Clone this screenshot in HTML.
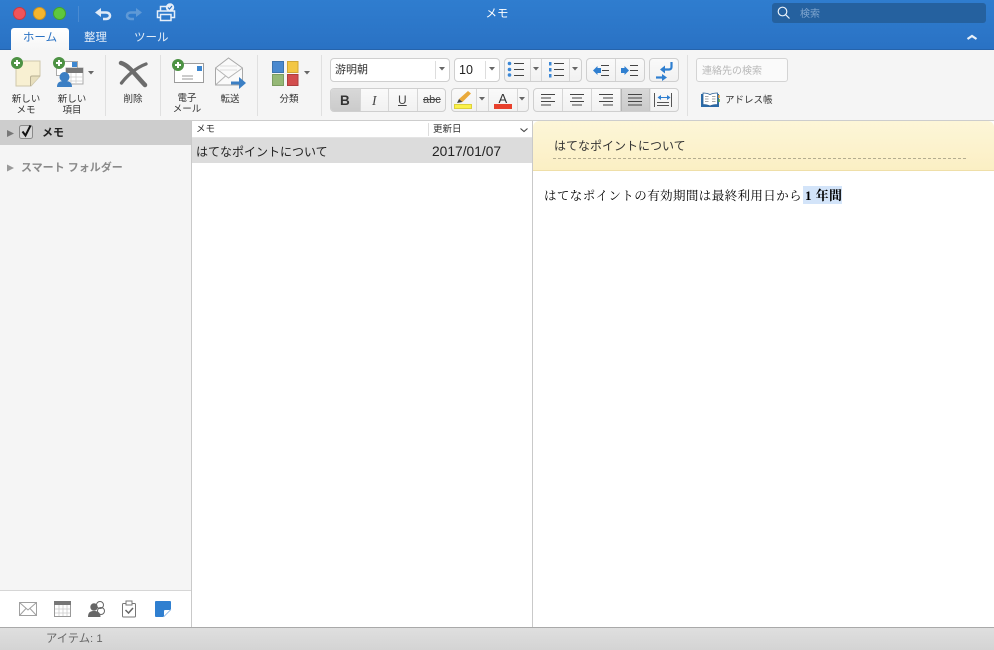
<!DOCTYPE html>
<html lang="ja"><head><meta charset="utf-8"><title>メモ</title>
<style>
html,body{margin:0;padding:0}
body{width:994px;height:650px;overflow:hidden;position:relative;background:#fff;font-family:"Liberation Sans","Noto Sans CJK JP",sans-serif;color:#222}
.a{position:absolute}
.t{position:absolute;white-space:nowrap;line-height:1}
.c{text-align:center}
.sm{font-size:9.5px;color:#333;line-height:11px}
.box{position:absolute;box-sizing:border-box;border:1px solid #cfcfcf;border-radius:4px;background:linear-gradient(#fafafa,#f1f1f1)}
.sep{position:absolute;top:55px;height:61px;width:1px;background:#e0e0e0}
svg{position:absolute;overflow:visible}
</style></head><body>

<!-- title bar -->
<div class="a" style="left:0;top:0;width:994px;height:50px;background:linear-gradient(#2f7dcf,#2a72c4);border-bottom:1px solid #2563ab;box-sizing:border-box"></div>
<div class="a" style="left:12.500px;top:7px;width:13px;height:13px;border-radius:50%;background:#f0545a;border:.5px solid #c93a40;box-sizing:border-box"></div>
<div class="a" style="left:32.500px;top:7px;width:13px;height:13px;border-radius:50%;background:#f6b52d;border:.5px solid #cf9420;box-sizing:border-box"></div>
<div class="a" style="left:52.500px;top:7px;width:13px;height:13px;border-radius:50%;background:#5ec83e;border:.5px solid #45a22c;box-sizing:border-box"></div>
<div class="a" style="left:78px;top:6px;width:1px;height:16px;background:#4a8bd2"></div>
<svg style="left:0;top:0" width="200" height="30" fill="none">
 <path d="M99 12.500h7c3 0 4 2 4 3.200s-1 3.300-4 3.300h-3" stroke="#dfeaf7" stroke-width="2.600"/><path d="M95 12.500l6-4.500v9z" fill="#dfeaf7"/>
 <path d="M138 12.500h-7c-3 0-4 2-4 3.200s1 3.300 4 3.300h3" stroke="#5f99d6" stroke-width="2.600"/><path d="M142 12.500l-6-4.500v9z" fill="#5f99d6"/>
 <path d="M160.500 11.500V6.500h9v5M160.500 17.500h-3v-6.500h17v6.500h-3M160.500 14.500h10.500v6h-10.500z" stroke="#e6eff9" stroke-width="1.500"/>
 <circle cx="170" cy="7.500" r="4.200" fill="#e6eff9"/><path d="M168 7.500l1.500 1.500 2.500-3" stroke="#2a72c4" stroke-width="1.100"/>
</svg>
<div class="t c" style="left:447px;top:9px;width:100px;font-size:11.500px;color:#fff">メモ</div>
<div class="a" style="left:772px;top:3px;width:214px;height:20px;border-radius:3px;background:#25619f"></div>
<svg style="left:776px;top:5px" width="16" height="16" fill="none" stroke="#eaf2fa" stroke-width="1.200"><circle cx="6.500" cy="6.500" r="4.300"/><path d="M9.800 9.800l3.700 3.700"/></svg>
<div class="t" style="left:800px;top:10px;font-size:10px;color:#80a6cf">検索</div>

<div class="a" style="left:11px;top:28px;width:58px;height:22px;background:linear-gradient(#fff,#f6f6f6);border-radius:3px 3px 0 0"></div>
<div class="t c" style="left:11px;top:33px;width:58px;font-size:11.500px;color:#2a72c4">ホーム</div>
<div class="t" style="left:84px;top:33px;font-size:11.500px;color:#e2ecf7">整理</div>
<div class="t" style="left:134px;top:33px;font-size:11.500px;color:#e2ecf7">ツール</div>
<svg style="left:965px;top:32px" width="14" height="10" fill="none"><path d="M2.500 7l4.500-3 4.500 3" stroke="#e8f0f9" stroke-width="2.200"/></svg>

<!-- ribbon -->
<div class="a" style="left:0;top:50px;width:994px;height:70px;background:#f5f5f5"></div>
<div class="a" style="left:0;top:120px;width:994px;height:1px;background:#cdcdcd"></div>
<div class="sep" style="left:105px"></div><div class="sep" style="left:160px"></div><div class="sep" style="left:257px"></div><div class="sep" style="left:321px"></div><div class="sep" style="left:687px"></div>

<svg style="left:0;top:50px" width="330" height="70" fill="none">
 <!-- new note -->
 <path d="M16 11h24v15l-9 10H16z" fill="#f8f0d2" stroke="#cfc8ac"/><path d="M40 26h-8c-1 0-1.500 .5-1.500 1.500V36" fill="#e8dfbd" stroke="#b9b093"/>
 <circle cx="17" cy="13" r="6" fill="#4d9244"/><path d="M17 10v6M14 13h6" stroke="#fff" stroke-width="2"/>
 <!-- new item -->
 <rect x="56.500" y="11.500" width="21" height="14" fill="#fff" stroke="#aaa"/><rect x="72" y="12" width="5" height="5" fill="#3d87d0"/>
 <rect x="66" y="18" width="17" height="16" fill="#fff" stroke="#aaa"/><rect x="66" y="18" width="17" height="5" fill="#777"/>
 <path d="M71 23v11M76 23v11M66 27h17M66 31h17" stroke="#ccc" stroke-width=".7"/>
 <circle cx="64.500" cy="27" r="5" fill="#3b7fc4"/><path d="M57 37c0-5 3-6 7.500-6s7.500 1 7.500 6z" fill="#3b7fc4"/>
 <circle cx="59" cy="13" r="6" fill="#4d9244"/><path d="M59 10v6M56 13h6" stroke="#fff" stroke-width="2"/>
 <path d="M88 21h6l-3 3.500z" fill="#666"/>
 <!-- delete -->
 <path d="M121 13C129 15 138 28 145 35" stroke="#6c6c6c" stroke-width="4.500" stroke-linecap="round"/>
 <path d="M146 14C135 18 126 27 121.500 33" stroke="#6c6c6c" stroke-width="3.300" stroke-linecap="round"/>
 <!-- mail -->
 <rect x="174.500" y="13.500" width="29" height="19" fill="#fff" stroke="#9c9c9c"/><rect x="197" y="16" width="5" height="5" fill="#3d87d0"/>
 <path d="M182 26h11M182 29h11" stroke="#999"/>
 <circle cx="178" cy="15" r="6" fill="#4d9244"/><path d="M178 12v6M175 15h6" stroke="#fff" stroke-width="2"/>
 <!-- forward -->
 <path d="M215.500 18l13-10 14 10v17h-27z" fill="#fafafa" stroke="#a8a8a8"/><path d="M215.500 18l13 10 14-10M215.500 35l10-9" stroke="#b5b5b5"/>
 <path d="M220 16h17M220 20h17" stroke="#ddd"/>
 <path d="M231 33h10" stroke="#3b7fc4" stroke-width="3"/><path d="M239 27l7 6-7 6z" fill="#3b7fc4"/>
 <!-- categorize -->
 <rect x="272.500" y="11.500" width="11" height="11" fill="#4a89cf" stroke="#3d73ad"/><rect x="287.500" y="11.500" width="10.500" height="11" fill="#f3c744" stroke="#cfa636"/>
 <rect x="272.500" y="24.500" width="11" height="11" fill="#95b876" stroke="#7c9c61"/><rect x="287.500" y="24.500" width="10.500" height="11" fill="#d24d4d" stroke="#ad3e3e"/>
 <path d="M304 21h6l-3 3.500z" fill="#666"/>
</svg>
<div class="t c sm" style="left:6px;top:93.500px;width:40px">新しい<br>メモ</div>
<div class="t c sm" style="left:52px;top:93.500px;width:40px">新しい<br>項目</div>
<div class="t c sm" style="left:113px;top:94px;width:40px">削除</div>
<div class="t c sm" style="left:167px;top:93px;width:40px">電子<br>メール</div>
<div class="t c sm" style="left:210px;top:94px;width:40px">転送</div>
<div class="t c sm" style="left:269px;top:94px;width:40px">分類</div>

<!-- font row -->
<div class="a" style="left:330px;top:58px;width:120px;height:24px;box-sizing:border-box;border:1px solid #cfcfcf;border-radius:4px;background:#fff"></div>
<div class="a" style="left:435px;top:61px;width:1px;height:18px;background:#ddd"></div>
<div class="t" style="left:335px;top:65px;font-size:11px;color:#333">游明朝</div>
<div class="a" style="left:454px;top:58px;width:46px;height:24px;box-sizing:border-box;border:1px solid #cfcfcf;border-radius:4px;background:#fff"></div>
<div class="a" style="left:485px;top:61px;width:1px;height:18px;background:#ddd"></div>
<div class="t" style="left:459px;top:64px;font-size:12.500px;color:#222">10</div>

<div class="box" style="left:504px;top:58px;width:78px;height:24px"></div>
<div class="box" style="left:586px;top:58px;width:59px;height:24px"></div>
<div class="box" style="left:649px;top:58px;width:30px;height:24px"></div>
<div class="box" style="left:330px;top:88px;width:116px;height:24px"></div>
<div class="a" style="left:331px;top:89px;width:29px;height:22px;background:linear-gradient(#d8d8d8,#cbcbcb);border-right:1px solid #b5b5b5;border-radius:3px 0 0 3px"></div>
<div class="box" style="left:451px;top:88px;width:78px;height:24px"></div>
<div class="box" style="left:533px;top:88px;width:146px;height:24px"></div>
<div class="a" style="left:621px;top:89px;width:29px;height:22px;box-sizing:border-box;background:linear-gradient(#d8d8d8,#cbcbcb);border:solid #b5b5b5;border-width:0 1px"></div>

<div class="t" style="left:340px;top:94px;font-family:'Liberation Sans',sans-serif;font-size:13.500px;font-weight:bold;color:#333">B</div>
<div class="t" style="left:372px;top:94px;font-family:'Liberation Serif',serif;font-size:13.500px;font-style:italic;color:#444">I</div>
<div class="t" style="left:398px;top:94px;font-size:12px;color:#444;text-decoration:underline">U</div>
<div class="t" style="left:423px;top:95px;font-size:11px;color:#444;text-decoration:line-through">abc</div>
<div class="t" style="left:498.500px;top:92px;font-size:13px;color:#333">A</div>

<svg style="left:325px;top:50px" width="360" height="70" fill="none">
 <!-- dropdown arrows -->
 <g fill="#666"><path d="M114 17h6l-3 3.500z"/><path d="M164 17h6l-3 3.500z"/><path d="M208 17h6l-3 3.500z"/><path d="M247 17h6l-3 3.500z"/>
 <path d="M154 47h6l-3 3.500z"/><path d="M194 47h6l-3 3.500z"/></g>
 <!-- dividers -->
 <g stroke="#d6d6d6"><path d="M35.500 39v22M63.500 39v22M92.500 39v22M151.500 39v22M163.500 39v22M192.500 39v22M205.500 9v22M216.500 9v22M244.500 9v22M290.500 9v22M237.500 39v22M266.500 39v22M295.500 39v22M325 39v22"/></g>
 <!-- bullets -->
 <g fill="#3b87d6"><circle cx="184.500" cy="13.500" r="1.800"/><circle cx="184.500" cy="19.500" r="1.800"/><circle cx="184.500" cy="25" r="1.800"/></g>
 <path d="M189 13.500h10M189 19.500h10M189 25.500h10" stroke="#444"/>
 <g fill="#3b87d6"><rect x="224" y="12" width="2.500" height="3.500"/><rect x="224" y="18" width="2.500" height="3.500"/><rect x="224" y="24" width="2.500" height="3.500"/></g>
 <path d="M229 13.500h10M229 19.500h10M229 25.500h10" stroke="#444"/>
 <!-- indent -->
 <path d="M268 20.500l4.500-4.500v9z" fill="#2f7fd0"/><path d="M272 18h4v5h-4z" fill="#2f7fd0"/><path d="M276 15.500h8M277 20.500h7M276 25.500h8" stroke="#444"/>
 <path d="M304 20.500l-4.500-4.500v9z" fill="#2f7fd0"/><path d="M296 18h4v5h-4z" fill="#2f7fd0"/><path d="M305 15.500h8M305 20.500h8M305 25.500h8" stroke="#444"/>
 <!-- rtl -->
 <path d="M346.500 12v5c0 1.500-1 2.500-2.500 2.500h-5" stroke="#2f7fd0" stroke-width="2.200"/><path d="M340 15.500l-5 4 5 4z" fill="#2f7fd0"/>
 <path d="M331 27.500h7" stroke="#2f7fd0" stroke-width="2.200"/><path d="M337 24l5 3.500-5 3.500z" fill="#2f7fd0"/>
 <!-- highlight -->
 <path d="M134 49l9-8 3 2.500-8.500 8.500z" fill="#e9a93a"/><path d="M132 53l2-4 3.500 3z" fill="#444"/>
 <rect x="129.500" y="54.500" width="17" height="4" fill="#fbf14a" stroke="#dcd13c"/>
 <rect x="169" y="54" width="18" height="5" fill="#e8402c"/>
 <!-- align -->
 <path d="M216 44.500h14M216 48h10M216 51.500h14M216 55h10M245 44.500h14M247 48h10M245 51.500h14M247 55h10M274 44.500h14M278 48h10M274 51.500h14M278 55h10M303 44.500h14M303 48h14M303 51.500h14M303 55h14" stroke="#444"/>
 <path d="M329.500 43v14M346.500 43v14" stroke="#555"/><path d="M332 52.500h12M332 55.500h12" stroke="#555"/>
 <path d="M334 47.500h10" stroke="#2f7fd0"/><path d="M336 45l-3.500 2.500 3.500 2.500zM342 45l3.500 2.500-3.500 2.500z" fill="#2f7fd0"/>
</svg>

<!-- contact -->
<div class="a" style="left:696px;top:58px;width:92px;height:24px;box-sizing:border-box;border:1px solid #d4d4d4;border-radius:3px;background:#fafafa"></div>
<div class="t" style="left:702px;top:67px;font-size:10px;color:#b8b8b8">連絡先の検索</div>
<svg style="left:700px;top:91px" width="22" height="18" fill="none">
 <path d="M1 3h18v13H1z" fill="#2a6aa8"/><path d="M3 2c3 0 5 .5 7 1.500C12 2.500 14 2 17.500 2v11.500c-3.500 0-5.500 .5-7.500 1.500-2-1-4-1.500-7-1.500z" fill="#fff" stroke="#2a5f95" stroke-width=".8"/>
 <path d="M5 5.500h3.500M5 8h3.500M5 10.500h3.500M12 5.500h3.500M12 8h3.500M12 10.500h3.500" stroke="#888" stroke-width=".8"/>
 <path d="M19 4v3" stroke="#e8a33a" stroke-width="1.500"/><path d="M19 8v3" stroke="#5aa23a" stroke-width="1.500"/>
</svg>
<div class="t" style="left:725px;top:96px;font-size:9.500px;color:#333">アドレス帳</div>

<!-- sidebar -->
<div class="a" style="left:0;top:121px;width:191px;height:507px;background:#f5f5f5"></div>
<div class="a" style="left:0;top:121px;width:191px;height:24px;background:#cdcdcd"></div>
<div class="a" style="left:191px;top:121px;width:1px;height:507px;background:#c9c9c9"></div>
<svg style="left:0;top:121px" width="60" height="60" fill="none">
 <path d="M7 9l7 3.500-7 3.500z" fill="#777"/>
 <rect x="19.500" y="4.500" width="13" height="13" rx="2" fill="#d8d8d8" stroke="#8a8a8a"/>
 <path d="M22.500 10.500l3 4 5-10" stroke="#111" stroke-width="2"/>
 <path d="M7 43.500l7 3.500-7 3.500z" fill="#9a9a9a"/>
</svg>
<div class="t" style="left:42px;top:128px;font-size:11px;font-weight:bold;color:#222">メモ</div>
<div class="t" style="left:21px;top:163px;font-size:11px;font-weight:bold;color:#8a8a8a">スマート フォルダー</div>
<div class="a" style="left:0;top:590px;width:191px;height:38px;background:#fff;border-top:1px solid #d6d6d6;box-sizing:border-box"></div>
<svg style="left:0;top:590px" width="191" height="38" fill="none">
 <rect x="19.500" y="12.500" width="17" height="13" stroke="#a0a0a0" fill="#fff"/><path d="M19.500 12.500L28 20l8.500-7.500M19.500 25.500l6.500-7M36.500 25.500l-6.500-7" stroke="#a0a0a0"/>
 <rect x="54.500" y="11.500" width="16" height="15" fill="#fff" stroke="#999"/><rect x="54" y="11" width="17" height="4" fill="#777"/>
 <path d="M59 15v11M63 15v11M67 15v11M55 19h15M55 23h15" stroke="#ccc" stroke-width=".8"/>
 <circle cx="100" cy="15" r="3.500" stroke="#666"/><circle cx="101" cy="21" r="3.500" stroke="#666"/>
 <circle cx="94" cy="17" r="3.700" fill="#666"/><path d="M88 27c0-5 2.500-6 6-6s6.500 1 6.500 6z" fill="#666"/>
 <rect x="122.500" y="13.500" width="13" height="13.500" rx="1" fill="#fff" stroke="#777"/><rect x="126" y="11" width="6" height="4" fill="#fff" stroke="#777"/>
 <path d="M125.500 20l3 3 4.500-5" stroke="#666" stroke-width="1.500"/>
 <path d="M155 12a1 1 0 0 1 1-1h14a1 1 0 0 1 1 1v7l-8 8h-7a1 1 0 0 1-1-1z" fill="#2f7fd0"/><path d="M170 20h-5a1 1 0 0 0-1 1v5z" fill="#fff"/><path d="M171 19.500l-7.500 7.500" stroke="#7fb0e3" stroke-width=".8"/>
</svg>

<!-- list -->
<div class="t" style="left:196px;top:125px;font-size:9.500px;color:#333">メモ</div>
<div class="a" style="left:428px;top:123px;width:1px;height:13px;background:#ddd"></div>
<div class="t" style="left:433px;top:125px;font-size:9.500px;color:#333">更新日</div>
<svg style="left:519px;top:127px" width="10" height="7" fill="none"><path d="M1.500 1.500l3.500 3 3.500-3" stroke="#444" stroke-width="1.100"/></svg>
<div class="a" style="left:192px;top:137px;width:340px;height:1px;background:#e4e4e4"></div>
<div class="a" style="left:192px;top:138px;width:340px;height:25px;background:#dcdcdc"></div>
<div class="t" style="left:196px;top:146px;font-size:12px;color:#222">はてなポイントについて</div>
<div class="t" style="left:432px;top:145px;font-size:13.800px;color:#222">2017/01/07</div>
<div class="a" style="left:532px;top:121px;width:1px;height:507px;background:#c9c9c9"></div>

<!-- note -->
<div class="a" style="left:533px;top:121px;width:461px;height:50px;box-sizing:border-box;background:linear-gradient(#fdf6d8,#fbefc4);border-bottom:1px solid #efdfa8;border-radius:6px 6px 0 0"></div>
<div class="t" style="left:554px;top:140px;font-size:12px;color:#333">はてなポイントについて</div>
<div class="a" style="left:553px;top:158px;width:413px;height:0;border-top:1px dashed #b4ad90"></div>
<div class="a" style="left:803px;top:186px;width:39px;height:18px;background:#d3e4f9"></div>
<div class="t" style="left:544px;top:189px;font-family:'Liberation Serif','Noto Serif CJK SC',serif;font-size:12.500px;letter-spacing:.4px;color:#000">はてなポイントの有効期間は最終利用日から<span style="font-weight:bold;font-size:13px;margin-left:3px">1 年間</span></div>

<!-- status -->
<div class="a" style="left:0;top:627px;width:994px;height:23px;box-sizing:border-box;border-top:1px solid #a9a9a9;background:linear-gradient(#dfdfdf,#d4d4d4)"></div>
<div class="t" style="left:46px;top:634px;font-size:11.300px;color:#666">アイテム: 1</div>
</body></html>
